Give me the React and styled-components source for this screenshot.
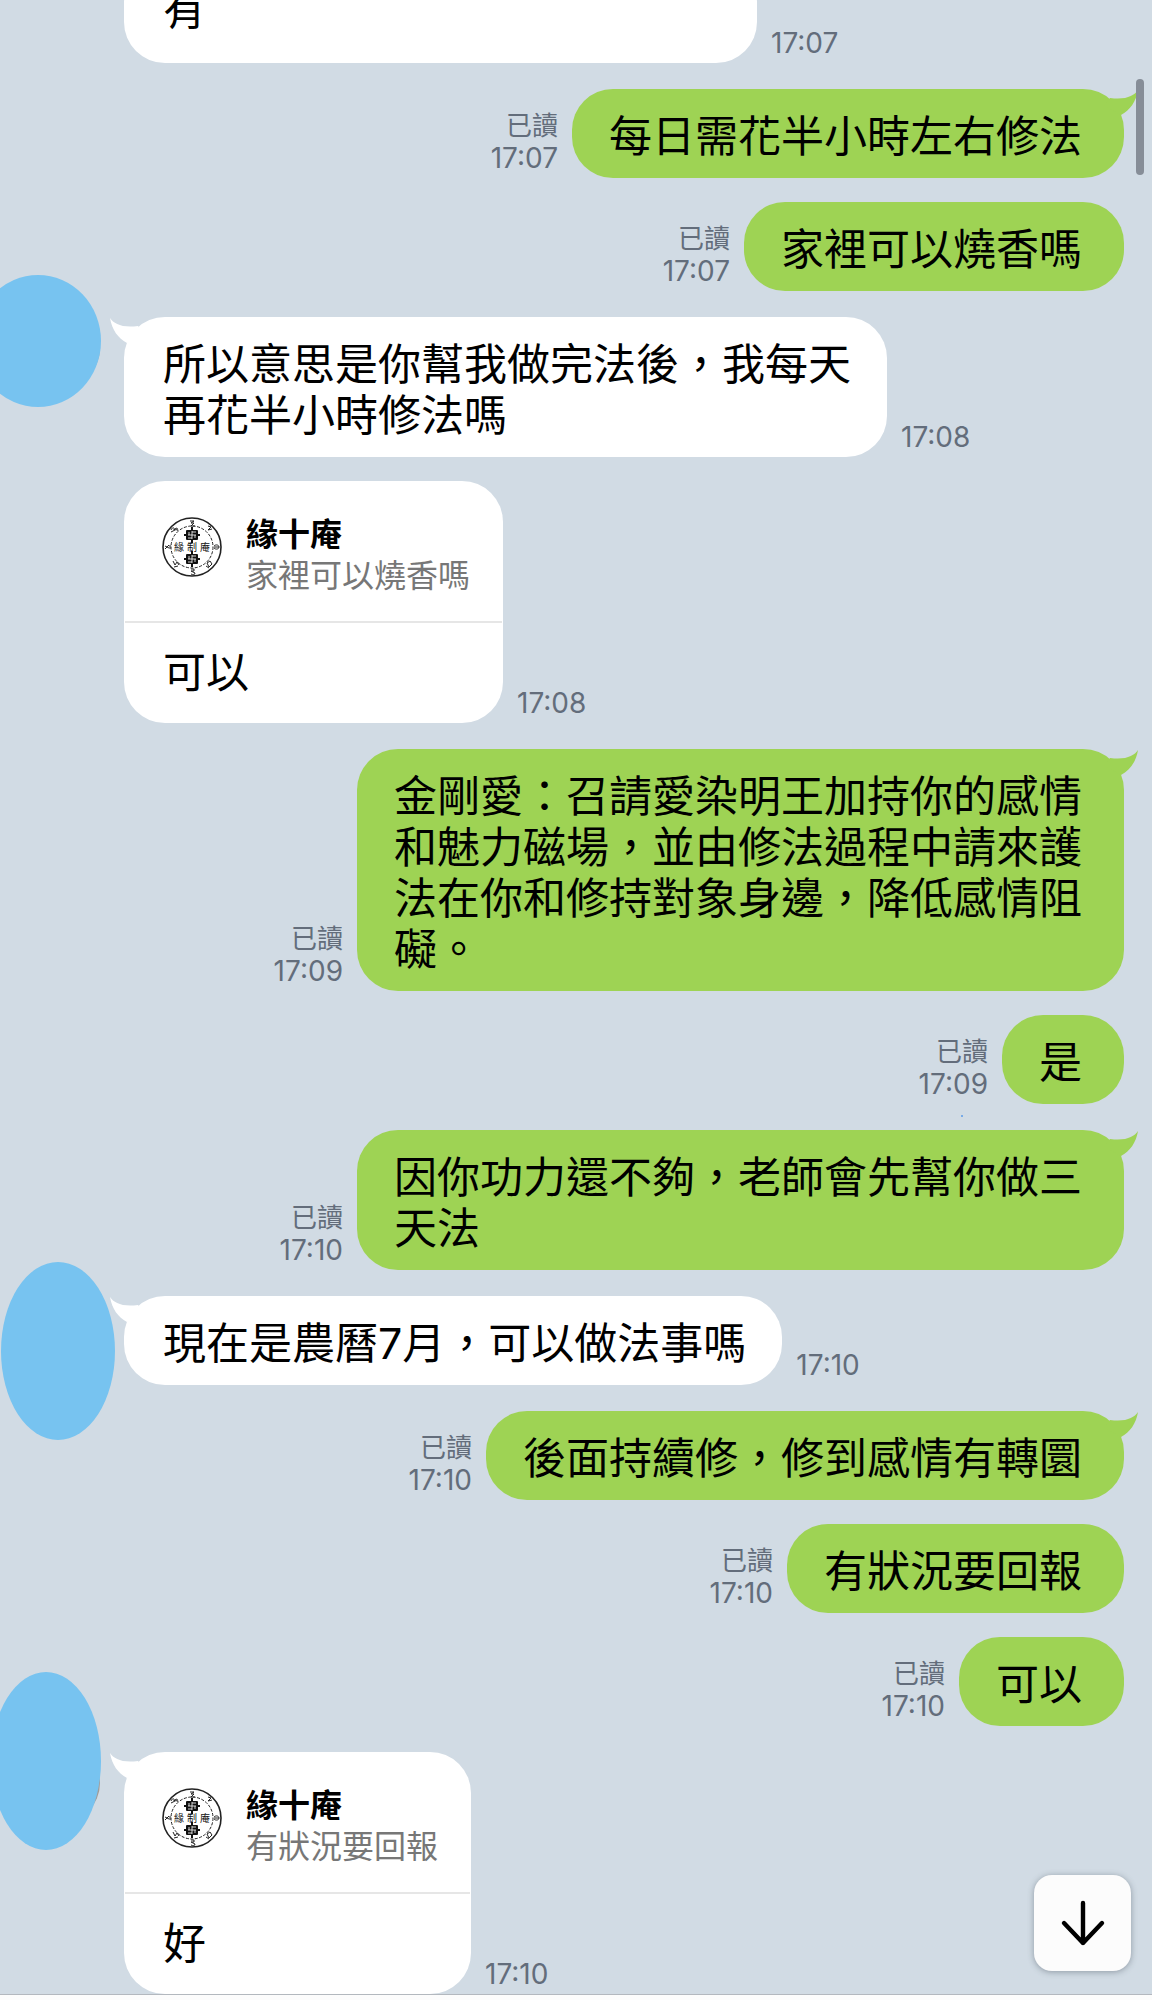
import React from 'react';
import styled, { createGlobalStyle } from 'styled-components';

const messages = [
  { id: 1, from: 'them', text: '有', time: '17:07', clipped: true },
  { id: 2, from: 'me', text: '每日需花半小時左右修法', time: '17:07', first: true },
  { id: 3, from: 'me', text: '家裡可以燒香嗎', time: '17:07' },
  {
    id: 4,
    from: 'them',
    text: '所以意思是你幫我做完法後，我每天再花半小時修法嗎',
    time: '17:08',
    first: true,
    cover: { left: -25, top: -42, width: 126, height: 132 },
  },
  { id: 5, from: 'them', text: '可以', time: '17:08', quote: '家裡可以燒香嗎' },
  {
    id: 6,
    from: 'me',
    text: '金剛愛：召請愛染明王加持你的感情和魅力磁場，並由修法過程中請來護法在你和修持對象身邊，降低感情阻礙。',
    time: '17:09',
    first: true,
  },
  { id: 7, from: 'me', text: '是', time: '17:09', dot: true },
  { id: 8, from: 'me', text: '因你功力還不夠，老師會先幫你做三天法', time: '17:10', first: true },
  {
    id: 9,
    from: 'them',
    text: '現在是農曆7月，可以做法事嗎',
    time: '17:10',
    first: true,
    cover: { left: 1, top: -34, width: 114, height: 178 },
  },
  { id: 10, from: 'me', text: '後面持續修，修到感情有轉圜', time: '17:10', first: true },
  { id: 11, from: 'me', text: '有狀況要回報', time: '17:10' },
  { id: 12, from: 'me', text: '可以', time: '17:10' },
  {
    id: 13,
    from: 'them',
    text: '好',
    time: '17:10',
    first: true,
    quote: '有狀況要回報',
    cover: { left: -9, top: -80, width: 110, height: 178 },
  },
];

function Tail({ side }) {
  return (
    <TailIcon $side={side} viewBox="0 0 34 26" aria-hidden="true">
      <path d="M0 0C4 6 12 10 28 8L34 16L17 25C8 20 2 12 0 0Z" fill="currentColor" />
    </TailIcon>
  );
}

function Emblem({ y }) {
  return (
    <g transform={`translate(30 ${y})`}>
      <path d="M-8 0H8M0 -8V8" stroke="#111" strokeWidth="2" />
      <rect x="-6" y="-5" width="12" height="10" rx="1" fill="#111" />
      <path
        d="M0 -4V4M-4 0H4M-3 -3V0M3 0V3M0 -3H4M-4 3H0"
        fill="none"
        stroke="#fff"
        strokeWidth="0.8"
      />
    </g>
  );
}

function Logo() {
  return (
    <LogoIcon viewBox="0 0 60 60" role="img" aria-label="緣十庵">
      <g fill="none" stroke="#222">
        <circle cx="30" cy="30" r="29" strokeWidth="1.6" />
        <circle cx="30" cy="30" r="21" strokeWidth="1" strokeDasharray="3 1.5" />
        <g strokeWidth="1">
          <path d="M28 4h4l-3 2h3l-3 3h4" />
          <path d="M46 9l3 1l-3 3l4-1" />
          <path d="M52 29c2-2 5-1 5 1s-3 3-5 1M52 30h5" />
          <path d="M45 46l3-2l2 3l-3 3zM44 49l3 2" />
          <path d="M29 52h3v2h-3l4 2c0 2-2 2-4 1" />
          <path d="M11 44l2 4l2-3l2 3M12 50l4-1" />
          <path d="M3 29l4 2M3 32l4-4M8 28v4" />
          <path d="M9 13c1-3 4-3 3 0M12 13c2-3 5-2 3 1M9 15l6-3" />
        </g>
      </g>
      <Emblem y={18} />
      <Emblem y={42} />
      <LogoText x="17" y="34">緣</LogoText>
      <LogoText x="30" y="34">制</LogoText>
      <LogoText x="43" y="34">庵</LogoText>
    </LogoIcon>
  );
}

function Message({ message }) {
  const { from, text, time, first, clipped, quote, cover, dot } = message;
  const mine = from === 'me';

  return (
    <Row $mine={mine} $first={first}>
      {cover && (
        <>
          <Avatar />
          <AvatarCover style={cover} />
        </>
      )}
      {quote ? (
        <Bubble>
          {first && <Tail side="left" />}
          <QuoteHead>
            <Logo />
            <div>
              <QuoteName>緣十庵</QuoteName>
              <QuoteText>{quote}</QuoteText>
            </div>
          </QuoteHead>
          <Reply>{text}</Reply>
        </Bubble>
      ) : (
        <Bubble $mine={mine}>
          {first && <Tail side={mine ? 'right' : 'left'} />}
          <Text $mine={mine} $clipped={clipped}>
            {text}
          </Text>
        </Bubble>
      )}
      <Meta $mine={mine}>
        {mine && <span>已讀</span>}
        <Time>{time}</Time>
        {dot && <Dot />}
      </Meta>
    </Row>
  );
}

function App() {
  return (
    <>
      <GlobalStyle />
      <Page lang="zh-Hant">
        <Chat>
          {messages.map((message) => (
            <Message key={message.id} message={message} />
          ))}
        </Chat>
        <ScrollThumb />
        <ScrollButton type="button" aria-label="捲到最新訊息">
          <svg width="48" height="48" viewBox="0 0 48 48" aria-hidden="true">
            <path
              d="M24 4V44M5 24L24 44L43 24"
              fill="none"
              stroke="#000"
              strokeWidth="4.4"
              strokeLinecap="round"
              strokeLinejoin="round"
            />
          </svg>
        </ScrollButton>
        <Footer />
      </Page>
    </>
  );
}

const GlobalStyle = createGlobalStyle`
  * {
    box-sizing: border-box;
  }
  body {
    margin: 0;
    background: #d1dbe4;
    font-family: Inter, 'Noto Sans CJK TC', sans-serif;
  }
  p {
    margin: 0;
  }
`;

const Page = styled.main`
  position: relative;
  display: flex;
  flex-direction: column;
  height: 100vh;
  overflow: hidden;
  background: #d1dbe4;
`;

const Chat = styled.section`
  flex: 1;
  min-height: 0;
  display: flex;
  flex-direction: column;
  justify-content: flex-end;
  overflow: hidden;
`;

const Row = styled.article`
  position: relative;
  flex-shrink: 0;
  display: flex;
  flex-direction: ${({ $mine }) => ($mine ? 'row-reverse' : 'row')};
  align-items: flex-end;
  gap: 14px;
  margin-top: ${({ $first }) => ($first ? '26px' : '24px')};
  padding: 0 28px 0 124px;
`;

const Avatar = styled.div`
  position: absolute;
  left: 20px;
  top: -9px;
  width: 80px;
  height: 80px;
  border-radius: 50%;
  background: #a09c98;
`;

const AvatarCover = styled.div`
  position: absolute;
  border-radius: 50%;
  background: #77c3f0;
`;

const Bubble = styled.div`
  position: relative;
  border-radius: 41px;
  color: ${({ $mine }) => ($mine ? '#9ed354' : '#fff')};
  background: currentColor;
`;

const TailIcon = styled.svg`
  position: absolute;
  top: 1px;
  ${({ $side }) => $side}: -14px;
  width: 34px;
  height: 26px;
  transform: ${({ $side }) => ($side === 'right' ? 'scaleX(-1)' : 'none')};
`;

const Text = styled.p`
  box-sizing: content-box;
  max-width: 16em;
  min-width: ${({ $clipped }) => ($clipped ? '558px' : '0')};
  padding: ${({ $mine }) => ($mine ? '22px 42px 16px 37px' : '22px 36px 16px 39px')};
  padding-bottom: ${({ $clipped }) => $clipped && '28px'};
  font-size: 43px;
  line-height: 51px;
  color: #000;
`;

const QuoteHead = styled.div`
  display: flex;
  gap: 24px;
  margin: 0 1px;
  padding: 33px 32px 25px 37px;
  border-bottom: 2px solid #e6e6e6;
  line-height: 41px;
  font-size: 32px;
`;

const LogoIcon = styled.svg`
  flex-shrink: 0;
  width: 60px;
  height: 60px;
  margin-top: 3px;
`;

const LogoText = styled.text`
  font-size: 10px;
  text-anchor: middle;
  fill: #111;
`;

const QuoteName = styled.p`
  font-weight: 700;
  color: #000;
`;

const QuoteText = styled.p`
  color: #777;
`;

const Reply = styled.p`
  padding: 24px 36px 25px 39px;
  font-size: 43px;
  line-height: 51px;
  color: #000;
`;

const Meta = styled.div`
  position: relative;
  display: flex;
  flex-direction: column;
  align-items: ${({ $mine }) => ($mine ? 'flex-end' : 'flex-start')};
  padding-bottom: 4px;
  font-size: 26px;
  line-height: 32px;
  color: #636d7b;
`;

const Time = styled.time`
  font-size: 28px;
`;

const Dot = styled.i`
  position: absolute;
  right: 25px;
  bottom: -13px;
  width: 2px;
  height: 2px;
  border-radius: 50%;
  background: #5a9be8;
`;

const ScrollThumb = styled.div`
  position: absolute;
  top: 79px;
  right: 8px;
  width: 8px;
  height: 96px;
  border-radius: 4px;
  background: #868d97;
`;

const ScrollButton = styled.button`
  position: absolute;
  right: 21px;
  bottom: 29px;
  display: flex;
  align-items: center;
  justify-content: center;
  width: 97px;
  height: 96px;
  padding: 0;
  border: 0;
  border-radius: 18px;
  background: #fcfcfc;
  box-shadow: 0 1px 6px rgba(60, 70, 85, 0.45);
`;

const Footer = styled.footer`
  flex-shrink: 0;
  height: 6px;
  border-top: 1px solid #b3b8be;
  background: #fcfcfc;
`;

export default App;
